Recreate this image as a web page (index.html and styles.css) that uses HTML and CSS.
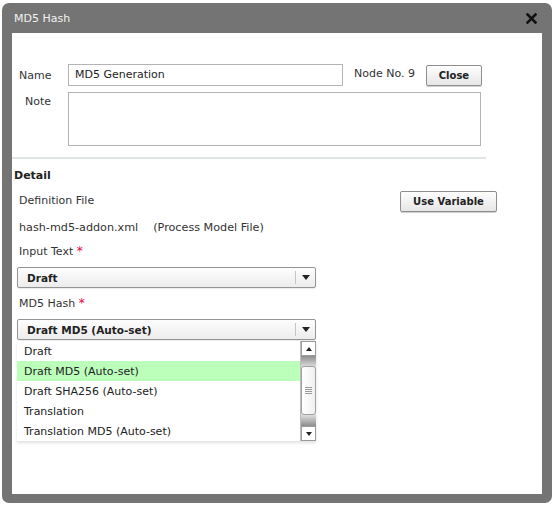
FILE: index.html
```html
<!DOCTYPE html>
<html>
<head>
<meta charset="utf-8">
<link rel="stylesheet" href="styles.css">
</head>
<body>
<div class="dialog">
  <div class="titlebar">
    <span class="title">MD5 Hash</span>
    <svg class="x-icon" width="11" height="11" viewBox="0 0 11 11"><path d="M1.5 1.5 L9.5 9.5 M9.5 1.5 L1.5 9.5" stroke="#111" stroke-width="2.6" stroke-linecap="square"/></svg>
  </div>
  <div class="content">
    <div class="row-name">
      <span class="lbl lbl-name">Name</span>
      <div class="input name-input">MD5 Generation</div>
      <span class="node-no">Node No. 9</span>
      <button class="btn btn-close">Close</button>
    </div>
    <div class="row-note">
      <span class="lbl lbl-note">Note</span>
      <div class="input note-input"></div>
    </div>
    <div class="sep"></div>
    <div class="detail">
      <div class="detail-title">Detail</div>
      <div class="row-def">
        <span class="text">Definition File</span>
        <button class="btn btn-var">Use Variable</button>
      </div>
      <div class="text file-line">hash-md5-addon.xml<span class="file-type">(Process Model File)</span></div>
      <div class="text field-lbl">Input Text <span class="req">*</span></div>
      <div class="select sel1">
        <span class="sel-val">Draft</span>
        <span class="sel-btn"><span class="tri"></span></span>
      </div>
      <div class="text field-lbl lbl2">MD5 Hash <span class="req">*</span></div>
      <div class="select-wrap">
        <div class="select">
          <span class="sel-val">Draft MD5 (Auto-set)</span>
          <span class="sel-btn"><span class="tri"></span></span>
        </div>
        <div class="menu">
          <div class="items">
            <div class="item">Draft</div>
            <div class="item active">Draft MD5 (Auto-set)</div>
            <div class="item">Draft SHA256 (Auto-set)</div>
            <div class="item">Translation</div>
            <div class="item">Translation MD5 (Auto-set)</div>
          </div>
          <div class="sbar">
            <div class="sb-arrow"><span class="tri tri-up"></span></div>
            <div class="sb-track">
              <div class="sb-thumb"><span class="grip"></span></div>
            </div>
            <div class="sb-arrow"><span class="tri"></span></div>
          </div>
        </div>
      </div>
    </div>
  </div>
</div>
</body>
</html>
```

FILE: styles.css
```css
html, body {
  margin: 0;
  padding: 0;
  background: #ffffff;
}
body {
  font-family: "DejaVu Sans", Verdana, sans-serif;
  font-size: 11px;
  color: #333;
}
.dialog {
  margin: 3px 0 0 2px;
  width: 550px;
  height: 500px;
  box-sizing: border-box;
  background: #747474;
  border-radius: 7px;
  padding: 0 10px 9px 10px;
  display: flex;
  flex-direction: column;
}
.titlebar {
  height: 30px;
  display: flex;
  align-items: center;
  justify-content: space-between;
  padding: 0 5px 0 2px;
}
.title {
  color: #f2f2f2;
  font-size: 11px;
}
.x-icon {
  display: block;
  margin-top: 1px;
}
.content {
  flex: 1;
  background: #fff;
  position: relative;
}
.row-name {
  display: flex;
  align-items: center;
  padding-top: 31px;
  height: 22px;
}
.lbl {
  display: block;
  color: #333;
}
.lbl-name {
  width: 49px;
  padding-left: 7px;
}
.input {
  box-sizing: border-box;
  border: 1px solid #b4b4b4;
  background: #fff;
  color: #222;
}
.name-input {
  width: 275px;
  height: 22px;
  line-height: 20px;
  padding-left: 6px;
}
.node-no {
  margin-left: 11px;
  margin-top: -3px;
}
.btn {
  font-family: "DejaVu Sans", Verdana, sans-serif;
  font-size: 10px;
  font-weight: bold;
  color: #222;
  border: 1px solid #8e8e8e;
  border-radius: 2px;
  background: linear-gradient(#fefefe, #e6e6e6);
  box-shadow: 0 1px 0 #d0d0d0;
  padding: 0;
  box-sizing: border-box;
}
.btn-close {
  margin-left: 11px;
  width: 56px;
  height: 21px;
}
.row-note {
  display: flex;
  margin-top: 6px;
}
.lbl-note {
  width: 43px;
  padding-left: 13px;
  padding-top: 3px;
}
.note-input {
  width: 413px;
  height: 54px;
}
.sep {
  margin-top: 11px;
  width: 474px;
  height: 2px;
  background: #e0e5e5;
}
.detail {
  padding-left: 2px;
}
.detail-title {
  font-weight: bold;
  color: #222;
  margin-top: 10px;
  line-height: 13px;
}
.text {
  color: #333;
  padding-left: 5px;
  line-height: 13px;
}
.row-def {
  display: flex;
  align-items: flex-start;
  justify-content: space-between;
  margin-top: 3px;
  width: 483px;
}
.row-def .text {
  padding-top: 9px;
}
.btn-var {
  width: 97px;
  height: 21px;
  margin-top: 6px;
}
.file-line {
  margin-top: 9px;
  font-size: 11.2px;
}
.file-type {
  margin-left: 15px;
}
.field-lbl {
  margin-top: 11px;
}
.req {
  color: #e8004a;
  font-size: 12px;
  line-height: 10px;
}
.lbl2 {
  margin-top: 9px;
}
.select {
  margin-left: 3px;
  width: 299px;
  height: 21px;
  box-sizing: border-box;
  border: 1px solid #949494;
  border-radius: 2px;
  background: linear-gradient(#fdfdfd, #ececec);
  display: flex;
  align-items: center;
  justify-content: space-between;
  box-shadow: 0 1px 1px rgba(0,0,0,0.08);
}
.sel1 {
  margin-top: 9px;
}
.sel-val {
  font-weight: bold;
  color: #222;
  padding-left: 9px;
  font-size: 10.5px;
}
.sel-btn {
  width: 19px;
  height: 13px;
  border-left: 1px solid #c4c4c4;
  display: flex;
  align-items: center;
  justify-content: center;
}
.tri {
  width: 0;
  height: 0;
  border-left: 4px solid transparent;
  border-right: 4px solid transparent;
  border-top: 5px solid #222;
}
.tri-up {
  border-top: none;
  border-bottom: 5px solid #222;
}
.select-wrap {
  position: relative;
  margin-top: 9px;
}
.menu {
  position: absolute;
  left: 3px;
  top: 22px;
  width: 299px;
  height: 100px;
  background: #fff;
  display: flex;
  box-shadow: 0 2px 3px rgba(0,0,0,0.12);
  z-index: 2;
}
.items {
  flex: 1;
}
.item {
  height: 20px;
  line-height: 22px;
  padding-left: 7px;
  color: #222;
}
.item.active {
  background: #bbffbb;
}
.sbar {
  width: 16px;
  display: flex;
  flex-direction: column;
  border-left: 1px solid #bdbdbd;
  box-sizing: border-box;
}
.sb-arrow {
  height: 15px;
  background: #fff;
  border: 1px solid #9b9b9b;
  box-sizing: border-box;
  display: flex;
  align-items: center;
  justify-content: center;
}
.sb-arrow .tri {
  border-left-width: 3px;
  border-right-width: 3px;
  border-top-width: 4px;
}
.sb-arrow .tri-up {
  border-bottom-width: 4px;
}
.sb-track {
  flex: 1;
  padding: 10px 0 10px 0;
  background: linear-gradient(#8e8e8e, #f4f4f4 20%, #f4f4f4 80%, #8e8e8e);
}
.sb-thumb {
  height: 49px;
  background: linear-gradient(90deg, #ffffff, #f0f0f0);
  border: 1px solid #a0a0a0;
  border-radius: 3px;
  box-sizing: border-box;
  display: flex;
  align-items: center;
  justify-content: center;
}
.grip {
  width: 7px;
  height: 8px;
  background: repeating-linear-gradient(#999 0 1px, transparent 1px 2px);
}
```
